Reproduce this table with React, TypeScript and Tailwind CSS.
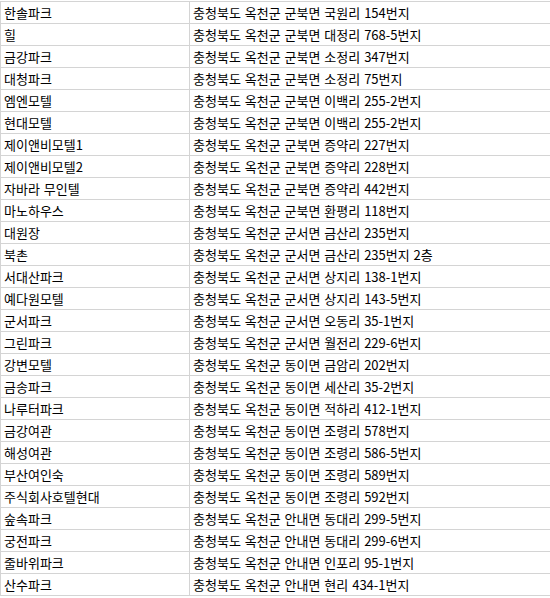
const rows: [string, string][] = [
  ["한솔파크", "충청북도 옥천군 군북면 국원리 154번지"],
  ["힐", "충청북도 옥천군 군북면 대정리 768-5번지"],
  ["금강파크", "충청북도 옥천군 군북면 소정리 347번지"],
  ["대청파크", "충청북도 옥천군 군북면 소정리 75번지"],
  ["엠엔모텔", "충청북도 옥천군 군북면 이백리 255-2번지"],
  ["현대모텔", "충청북도 옥천군 군북면 이백리 255-2번지"],
  ["제이앤비모텔1", "충청북도 옥천군 군북면 증약리 227번지"],
  ["제이앤비모텔2", "충청북도 옥천군 군북면 증약리 228번지"],
  ["자바라 무인텔", "충청북도 옥천군 군북면 증약리 442번지"],
  ["마노하우스", "충청북도 옥천군 군북면 환평리 118번지"],
  ["대원장", "충청북도 옥천군 군서면 금산리 235번지"],
  ["북촌", "충청북도 옥천군 군서면 금산리 235번지 2층"],
  ["서대산파크", "충청북도 옥천군 군서면 상지리 138-1번지"],
  ["예다원모텔", "충청북도 옥천군 군서면 상지리 143-5번지"],
  ["군서파크", "충청북도 옥천군 군서면 오동리 35-1번지"],
  ["그린파크", "충청북도 옥천군 군서면 월전리 229-6번지"],
  ["강변모텔", "충청북도 옥천군 동이면 금암리 202번지"],
  ["금송파크", "충청북도 옥천군 동이면 세산리 35-2번지"],
  ["나루터파크", "충청북도 옥천군 동이면 적하리 412-1번지"],
  ["금강여관", "충청북도 옥천군 동이면 조령리 578번지"],
  ["해성여관", "충청북도 옥천군 동이면 조령리 586-5번지"],
  ["부산여인숙", "충청북도 옥천군 동이면 조령리 589번지"],
  ["주식회사호텔현대", "충청북도 옥천군 동이면 조령리 592번지"],
  ["숲속파크", "충청북도 옥천군 안내면 동대리 299-5번지"],
  ["궁전파크", "충청북도 옥천군 안내면 동대리 299-6번지"],
  ["줄바위파크", "충청북도 옥천군 안내면 인포리 95-1번지"],
  ["산수파크", "충청북도 옥천군 안내면 현리 434-1번지"],
];

export default function App() {
  return (
    <div
      className="w-[550px] h-[598px] overflow-hidden bg-white pt-px text-black text-[13px] [word-spacing:1px]"
      style={{ fontFamily: '"Noto Sans CJK KR", "Noto Sans", sans-serif' }}
    >
      <div className="border-t border-l border-[#d4d4d4]">
        {rows.map(([name, addr]) => (
          <div key={name} className="flex h-[22px] border-b border-[#d4d4d4] leading-[21px]">
            <div className="w-[189px] shrink-0 border-r border-[#d4d4d4] pl-[3px] whitespace-nowrap">
              {name}
            </div>
            <div className="flex-1 pl-[3px] whitespace-nowrap">{addr}</div>
          </div>
        ))}
      </div>
    </div>
  );
}
